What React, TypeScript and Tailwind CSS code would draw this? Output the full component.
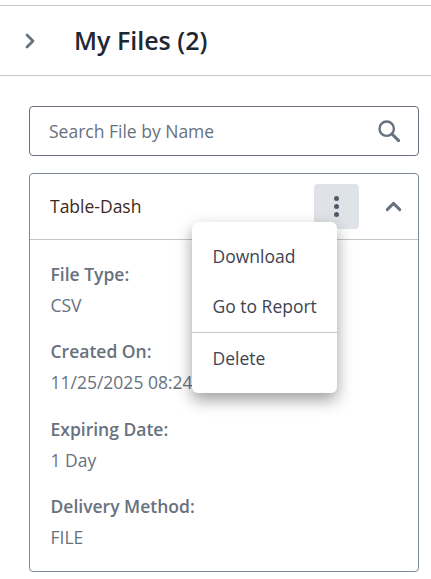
import { ChevronRight, ChevronUp } from "lucide-react";

const details = [
  { label: "File Type:", value: "CSV" },
  { label: "Created On:", value: "11/25/2025 08:24" },
  { label: "Expiring Date:", value: "1 Day" },
  { label: "Delivery Method:", value: "FILE" },
];

export default function App() {
  return (
    <div className="h-[579px] w-[431px] overflow-hidden bg-white pt-[5px] font-['Open_Sans',sans-serif]">
      <div className="flex h-[71px] items-center border-y border-[#c4c7d0] pl-[18px]">
        <ChevronRight size={24} strokeWidth={2.75} className="text-[#68717e]" />
        <h1 className="ml-[32px] text-[25px] font-semibold text-[#1f2733]">My Files (2)</h1>
      </div>

      <div className="pl-[29px] pr-[12px] pt-[30px]">
        <div className="flex h-[50px] items-center justify-between rounded-[4px] border border-[#68717e] pl-[19px] pr-[18px]">
          <span className="text-[17.5px] leading-[24px] pb-[1px] text-[#68717e]">Search File by Name</span>
          <svg width="22" height="22" viewBox="0 0 22 22" fill="none" stroke="currentColor" className="text-[#68717e]">
            <circle cx="8.7" cy="8.7" r="7.2" strokeWidth="2.4" />
            <path d="M14 14l6.6 6.6" strokeWidth="3" strokeLinecap="round" />
          </svg>
        </div>

        <div className="relative mt-[17px] h-[399px] rounded-[4px] border border-[#7c8798]">
          <div className="flex h-[66px] items-center border-b border-[#c4c7d0] pl-[20px]">
            <span className="text-[17.5px] text-[#3a2a22]">Table-Dash</span>
            <button className="ml-auto flex h-[45px] w-[45px] flex-col items-center justify-center gap-[3px] rounded-[4px] bg-[#dfe2e6]">
              <span className="h-[5px] w-[5px] rounded-full bg-[#4f5a68]" />
              <span className="h-[5px] w-[5px] rounded-full bg-[#4f5a68]" />
              <span className="h-[5px] w-[5px] rounded-full bg-[#4f5a68]" />
            </button>
            <div className="flex w-[59px] justify-center pl-[9px]">
              <ChevronUp size={25} strokeWidth={2.75} className="text-[#68717e]" />
            </div>
          </div>

          <div className="flex flex-col gap-[24.4px] pl-[20.5px] pt-[23px]">
            {details.map((d) => (
              <div key={d.label} className="flex flex-col gap-[9px] text-[17.5px] leading-[22px]">
                <span className="font-semibold text-[#68717e]">{d.label}</span>
                <span className="text-[#68717e]">{d.value}</span>
              </div>
            ))}
          </div>

          <div className="absolute left-[162px] top-[48px] w-[145px] whitespace-nowrap rounded-[6px] bg-white text-[#3d4450] shadow-[0_7px_16px_rgba(0,0,0,0.38)]">
            <div className="flex flex-col gap-[28px] pl-[20.5px] pt-[23px] pb-[15px] text-[17.5px] leading-[22px]">
              <span>Download</span>
              <span>Go to Report</span>
            </div>
            <div className="border-t border-[#c4c7d0] pl-[20.5px] pt-[14px] pb-[24px] text-[17.5px] leading-[22px]">
              Delete
            </div>
          </div>
        </div>
      </div>
    </div>
  );
}
